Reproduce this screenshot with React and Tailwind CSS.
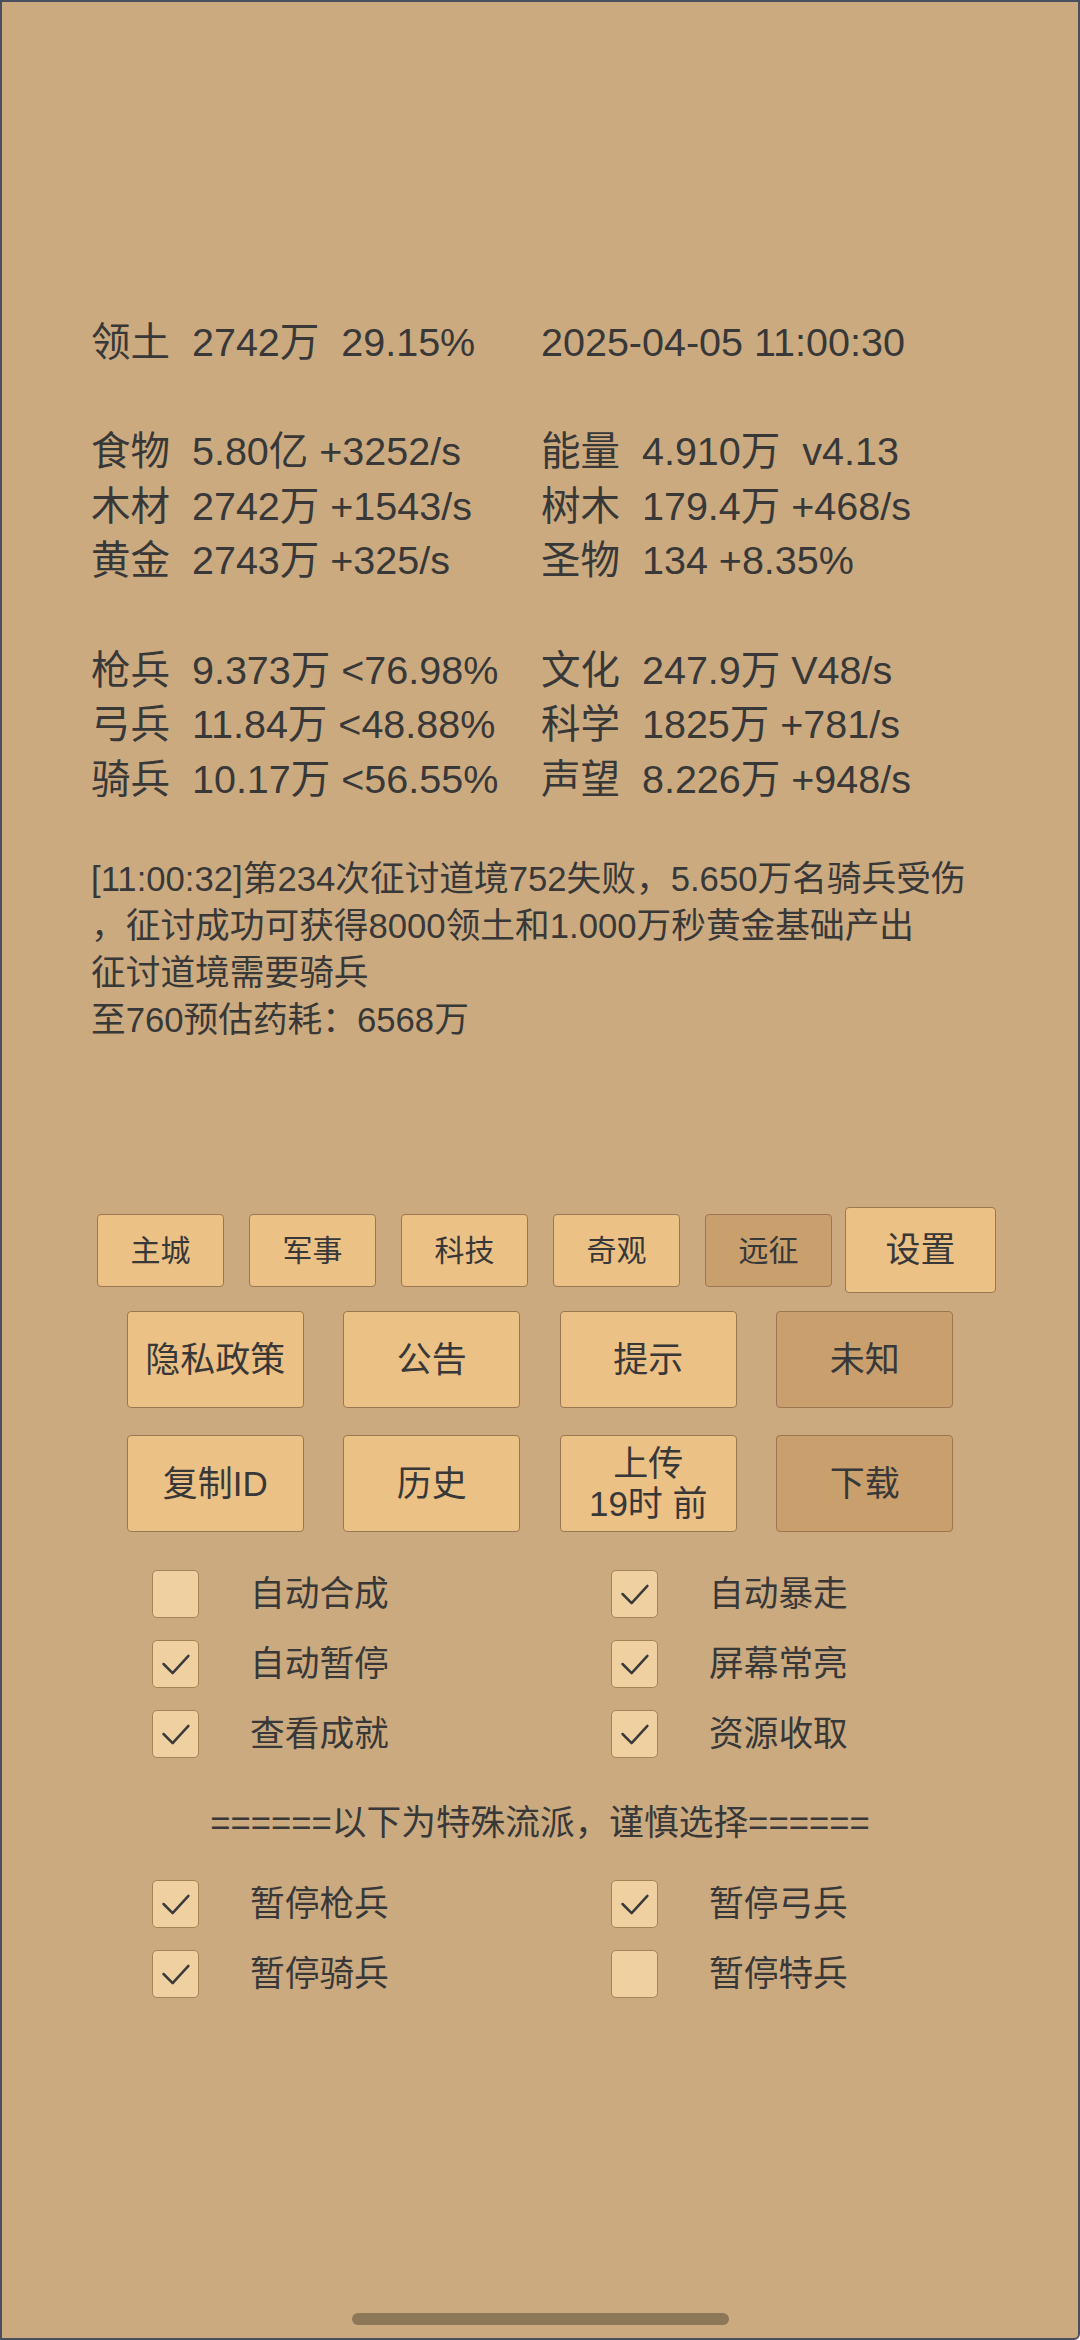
import React from 'react';

const stats = [
  ['领土  2742万  29.15%', '2025-04-05 11:00:30'],
  null,
  ['食物  5.80亿 +3252/s', '能量  4.910万  v4.13'],
  ['木材  2742万 +1543/s', '树木  179.4万 +468/s'],
  ['黄金  2743万 +325/s', '圣物  134 +8.35%'],
  null,
  ['枪兵  9.373万 <76.98%', '文化  247.9万 V48/s'],
  ['弓兵  11.84万 <48.88%', '科学  1825万 +781/s'],
  ['骑兵  10.17万 <56.55%', '声望  8.226万 +948/s'],
];

const logLines = [
  '[11:00:32]第234次征讨道境752失败，5.650万名骑兵受伤',
  '，征讨成功可获得8000领土和1.000万秒黄金基础产出',
  '征讨道境需要骑兵',
  '至760预估药耗：6568万',
];

const tabs = [
  { label: '主城' },
  { label: '军事' },
  { label: '科技' },
  { label: '奇观' },
  { label: '远征', active: true },
];

const Check = ({ checked, label }) => (
  <div className="flex items-center h-[48px]">
    <div className="w-[47px] h-[48px] rounded-[5px] border-[1.5px] border-[#a4825a] bg-[#efd1a1] flex items-center justify-center shrink-0">
      {checked && (
        <svg width="47" height="48" viewBox="0 0 47 48" fill="none">
          <polyline points="11,24 20.5,33.5 37,15.5" stroke="#3a3a3a" strokeWidth="2.6" strokeLinecap="round" strokeLinejoin="round" />
        </svg>
      )}
    </div>
    <span className="ml-[51px] text-[34.7px] leading-none whitespace-nowrap">{label}</span>
  </div>
);

const BigButton = ({ children, dark }) => (
  <button
    className={`w-[177px] h-[97px] rounded-[4px] border-[1.5px] border-[#9a7752] flex flex-col items-center justify-center text-[35px] leading-[40px] text-[#383838] ${
      dark ? 'bg-[#c99f6d]' : 'bg-[#ebc185]'
    }`}
  >
    {children}
  </button>
);

export default function App() {
  return (
    <div className="h-[2340px] w-[1080px] bg-[#cbaa80] border-2 border-[#4a4f60] rounded-br-md flex flex-col text-[#383838] font-['Liberation_Sans','Noto_Sans_CJK_SC',sans-serif]">
      {/* stats */}
      <div className="pt-[313px] pl-[89px] text-[39.5px] leading-[54.6px]">
        {stats.map((row, i) =>
          row ? (
            <div key={i} className="grid grid-cols-[450px_1fr] whitespace-pre">
              <span>{row[0]}</span>
              <span>{row[1]}</span>
            </div>
          ) : (
            <div key={i} className="h-[54.6px]" />
          )
        )}
      </div>

      {/* log */}
      <div className="mt-[50px] pl-[89px] text-[34.7px] leading-[47px]">
        {logLines.map((l, i) => (
          <div key={i} className="whitespace-nowrap">{l}</div>
        ))}
      </div>

      {/* tab row */}
      <div className="mt-[163px] pl-[95px] flex items-center h-[86px]">
        {tabs.map((t, i) => (
          <button
            key={t.label}
            className={`w-[127px] h-[73px] rounded-[4px] border-[1.5px] border-[#9a7752] text-[30px] text-[#383838] ${
              t.active ? 'bg-[#c99f6d]' : 'bg-[#ebc185]'
            } ${i > 0 ? 'ml-[25px]' : ''}`}
          >
            {t.label}
          </button>
        ))}
        <button className="ml-[13px] w-[151px] h-[86px] rounded-[4px] border-[1.5px] border-[#9a7752] bg-[#ebc185] text-[35px] text-[#383838]">
          设置
        </button>
      </div>

      <div className="mt-[18px] flex justify-center gap-[39.5px]">
        <BigButton>隐私政策</BigButton>
        <BigButton>公告</BigButton>
        <BigButton>提示</BigButton>
        <BigButton dark>未知</BigButton>
      </div>

      <div className="mt-[27px] flex justify-center gap-[39.5px]">
        <BigButton>复制ID</BigButton>
        <BigButton>历史</BigButton>
        <BigButton>
          <span>上传</span>
          <span>19时 前</span>
        </BigButton>
        <BigButton dark>下载</BigButton>
      </div>

      {/* options */}
      <div className="mt-[38px] pl-[150px] grid grid-cols-[459px_1fr] gap-y-[22px]">
        <Check label="自动合成" />
        <Check checked label="自动暴走" />
        <Check checked label="自动暂停" />
        <Check checked label="屏幕常亮" />
        <Check checked label="查看成就" />
        <Check checked label="资源收取" />
      </div>

      <div className="mt-[42px] text-center text-[34.7px] leading-[47px] whitespace-nowrap">
        ======以下为特殊流派，谨慎选择======
      </div>

      <div className="mt-[33px] pl-[150px] grid grid-cols-[459px_1fr] gap-y-[22px]">
        <Check checked label="暂停枪兵" />
        <Check checked label="暂停弓兵" />
        <Check checked label="暂停骑兵" />
        <Check label="暂停特兵" />
      </div>

      {/* home indicator */}
      <div className="mt-auto mb-[13px] flex justify-center">
        <div className="w-[377px] h-[12px] rounded-full bg-[#8c7859]" />
      </div>
    </div>
  );
}
